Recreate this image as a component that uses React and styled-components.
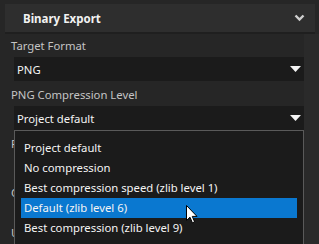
import React from "react";
import styled, { createGlobalStyle } from "styled-components";

const GlobalStyle = createGlobalStyle`
    body {
        margin: 0;
        background: #262626;
        font-family: "Noto Sans", "Liberation Sans", sans-serif;
        font-size: 11.3px;
    }
`;

const Page = styled.div`
    position: relative;
    width: 319px;
    height: 244px;
    overflow: hidden;
    background: #262626;
    display: flex;
    flex-direction: column;
`;

const Header = styled.div`
    display: flex;
    align-items: center;
    justify-content: space-between;
    height: 28px;
    margin: 4px 4px 0 5px;
    padding: 0 10px 0 18px;
    background: #2e2e2e;
    border-bottom: 2px solid #1f1f1f;
`;

const HeaderTitle = styled.span`
    color: #f2f2f2;
    font-weight: 700;
    font-size: 11.5px;
`;

const Body = styled.div`
    display: flex;
    flex: 1;
`;

const Fields = styled.div`
    width: 304px;
    padding-left: 11px;
    box-sizing: border-box;
    display: flex;
    flex-direction: column;
`;

const Track = styled.div`
    flex: 1;
    background: #2a2a2a;
`;

const Label = styled.div`
    color: #c4c4c4;
    line-height: 20px;
    margin-top: ${({ first }) => (first ? "2px" : "4px")};
    white-space: nowrap;
`;

const Select = styled.div`
    display: flex;
    align-items: center;
    justify-content: space-between;
    height: ${({ h }) => h || 24}px;
    margin: 1px 0 0 3px;
    padding: 0 3px;
    background: #1b1b1b;
    color: #f4f4f4;
`;

const Dropdown = styled.ul`
    position: absolute;
    left: 14px;
    top: 130px;
    width: 290px;
    height: 130px;
    box-sizing: border-box;
    margin: 0;
    padding: 7px 6px 0 6px;
    list-style: none;
    background: #1b1b1b;
    border: 1px solid #5a5a5a;
`;

const Option = styled.li`
    height: 20px;
    line-height: 20px;
    padding-left: 3px;
    color: #f4f4f4;
    background: ${({ active }) => (active ? "#0a78d0" : "transparent")};
    white-space: nowrap;
`;

const Cursor = styled.svg`
    position: absolute;
    left: 186px;
    top: 205px;
`;

function Chevron() {
    return (
        <svg width="11" height="8" viewBox="0 0 11 8">
            <path d="M1.5 1.5 L5.5 5.5 L9.5 1.5" fill="none" stroke="#cfcfcf" strokeWidth="2.4" />
        </svg>
    );
}

function Caret() {
    return (
        <svg width="11" height="6" viewBox="0 0 11 6">
            <path d="M0 0 H11 L5.5 6 Z" fill="#f4f4f4" />
        </svg>
    );
}

const options = [
    "Project default",
    "No compression",
    "Best compression speed (zlib level 1)",
    "Default (zlib level 6)",
    "Best compression (zlib level 9)",
];

function App() {
    return (
        <Page>
            <GlobalStyle />
            <Header>
                <HeaderTitle>Binary Export</HeaderTitle>
                <Chevron />
            </Header>
            <Body>
                <Fields>
                    <Label first>Target Format</Label>
                    <Select>
                        PNG
                        <Caret />
                    </Select>
                    <Label>PNG Compression Level</Label>
                    <Select>
                        Project default
                        <Caret />
                    </Select>
                    <Label>P</Label>
                    <Select />
                    <Label>C</Label>
                    <Select h={15} />
                    <Label>U</Label>
                </Fields>
                <Track />
            </Body>
            <Dropdown>
                {options.map((o, i) => (
                    <Option key={o} active={i === 3}>
                        {o}
                    </Option>
                ))}
            </Dropdown>
            <Cursor width="12" height="19" viewBox="0 0 12 19">
                <path
                    d="M0.5 0.5 V15.5 L4 12.2 L6.4 17.8 L8.6 16.9 L6.3 11.4 H11 Z"
                    fill="#ffffff"
                    stroke="#000000"
                    strokeWidth="1"
                />
            </Cursor>
        </Page>
    );
}

export default App;
